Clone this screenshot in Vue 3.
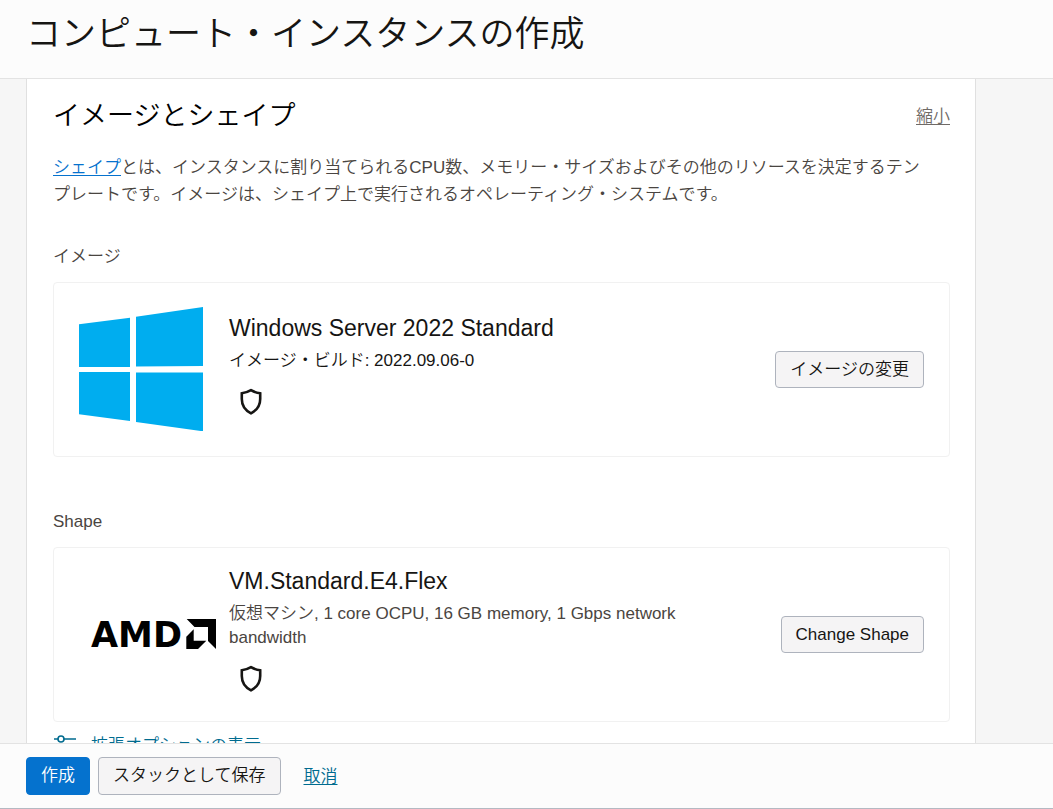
<template>
    <div class='page'>
        <header class='page-header'>
            <h1>コンピュート・インスタンスの作成</h1>
        </header>

        <main class='page-body'>
            <section class='panel'>
                <div class='panel-head'>
                    <h2>イメージとシェイプ</h2>
                    <a href='#' class='collapse-link' @click.prevent>縮小</a>
                </div>
                <p class='description'><a href='#' class='shape-link' @click.prevent>シェイプ</a>とは、インスタンスに割り当てられるCPU数、メモリー・サイズおよびその他のリソースを決定するテン<br>プレートです。イメージは、シェイプ上で実行されるオペレーティング・システムです。</p>

                <div v-for='item in items' :key='item.id' class='group'>
                    <h3 :id='item.id'>{{ item.label }}</h3>
                    <div class='card' role='group' :aria-labelledby='item.id'>
                        <div class='logo'>
                            <svg v-if='item.id=="image"' width='124' height='124' viewBox='0 0 124 124' fill='#00adef' role='img' aria-label='Windows'>
                                <path d='M0 17.3L51 10.7V60H0z'/>
                                <path d='M57 9.7L124 0V59L57 59.6z'/>
                                <path d='M0 65H51V114L0 107.3z'/>
                                <path d='M57 65.6H124V124.3L57 115z'/>
                            </svg>
                            <svg v-else class='amd' width='126' height='46' viewBox='0 -8 126 46' role='img' aria-label='AMD'>
                                <text x='0' y='28' class='amd-text'>AMD</text>
                                <path d='M95.7 0H125V30L117 22V8H103.5z'/>
                                <path d='M102.7 10.3V21.7H115.3L107 30H95.3V17.7z'/>
                            </svg>
                        </div>
                        <div class='info'>
                            <h4>{{ item.title }}</h4>
                            <p :class='{muted:item.muted}'>{{ item.detail }}</p>
                            <svg class='shield' width='22' height='27' viewBox='0 0 22 27' fill='none' stroke='#161513' stroke-width='2.6'>
                                <path d='M11 2.2Q15.5 4.8 20.2 5.3V11C20.2 17.5 16.5 22.5 11 25.3C5.5 22.5 1.8 17.5 1.8 11V5.3Q6.5 4.8 11 2.2z'/>
                            </svg>
                        </div>
                        <button type='button' class='btn'>{{ item.button }}</button>
                    </div>
                </div>

                <a href='#' class='advanced-link' @click.prevent>
                    <svg width='24' height='24' viewBox='0 0 24 24' fill='none' stroke='currentColor' stroke-width='1.6'>
                        <path d='M1 5H5M11 5H23M1 14H12M19 14H23M1 22H5M11 22H23'/>
                        <circle cx='8' cy='5' r='3'/>
                        <circle cx='15.5' cy='14' r='3'/>
                        <circle cx='8' cy='22' r='3'/>
                    </svg>
                    <span>拡張オプションの表示</span>
                </a>
            </section>
        </main>

        <footer class='page-footer'>
            <button type='button' class='btn primary'>作成</button>
            <button type='button' class='btn'>スタックとして保存</button>
            <a href='#' class='cancel-link' @click.prevent>取消</a>
        </footer>
    </div>
</template>

<script setup>
const items = [
    {
        id:'image',
        label:'イメージ',
        title:'Windows Server 2022 Standard',
        detail:'イメージ・ビルド: 2022.09.06-0',
        button:'イメージの変更',
        muted:false
    },
    {
        id:'shape',
        label:'Shape',
        title:'VM.Standard.E4.Flex',
        detail:'仮想マシン, 1 core OCPU, 16 GB memory, 1 Gbps network bandwidth',
        button:'Change Shape',
        muted:true
    }
];
</script>

<style>
body{margin:0;}
</style>

<style scoped>
.page{display:flex;flex-direction:column;height:100vh;box-sizing:border-box;background-color:#f6f6f6;color:#161513;font-family:"Liberation Sans","Noto Sans CJK JP",sans-serif;font-size:17px;font-weight:350;line-height:27px;}
h1,h2,h3,h4,p{margin:0;font-weight:350;}

.page-header{padding:12px 26px 22px;background-color:#fcfcfc;border-bottom:1px solid #e3e3e3;}
h1{font-size:35px;line-height:44px;}

.page-body{flex:1;min-height:0;overflow:hidden;}
.panel{margin:0 77px 0 26px;padding:19px 25px 40px 26px;background-color:white;border:solid #e0e0e0;border-width:0 1px;}
.panel-head{display:flex;justify-content:space-between;align-items:center;margin-bottom:20px;}
h2{font-size:27px;line-height:36px;color:black;}
.collapse-link{color:#6f6a66;}
.description{color:#4a4541;}
.shape-link{color:#0572ce;}

.group{margin-top:35px;}
.group + .group{margin-top:51px;}
h3{margin-bottom:12px;font-size:17px;line-height:27px;color:#4a4541;}
.card{display:flex;align-items:center;min-height:175px;box-sizing:border-box;padding:16px 25px;border:1px solid #f1f1f1;border-radius:4px;}
.logo{display:flex;flex:none;width:150px;padding-bottom:2px;}
.amd{margin-left:12px;}
.amd-text{font-family:"DejaVu Sans",sans-serif;font-weight:bold;font-size:35px;}
.info{flex:1;margin-right:48px;padding-bottom:12px;}
h4{margin-bottom:6px;font-size:23px;line-height:30px;}
.info p{line-height:24px;}
.muted{color:#4a4541;}
.shield{display:block;margin:15px 0 0 11px;}

.btn{flex:none;padding:0 14px;border:1px solid #aeb3bd;border-radius:4px;background-color:#f5f4f5;color:#161513;font:inherit;line-height:35px;cursor:pointer;}
.primary{background-color:#0572ce;border-color:#0572ce;color:white;}

.advanced-link{display:inline-flex;align-items:center;gap:14px;margin-top:10px;color:#006b8f;text-decoration:none;}

.page-footer{display:flex;align-items:center;gap:8px;padding:13px 26px;background-color:#fcfcfc;border-top:1px solid #e3e3e3;border-bottom:1px solid #b4b9c2;}
.page-footer .btn{line-height:36px;}
.cancel-link{margin-left:15px;color:#006b8f;}
a{text-underline-offset:2px;}
</style>
